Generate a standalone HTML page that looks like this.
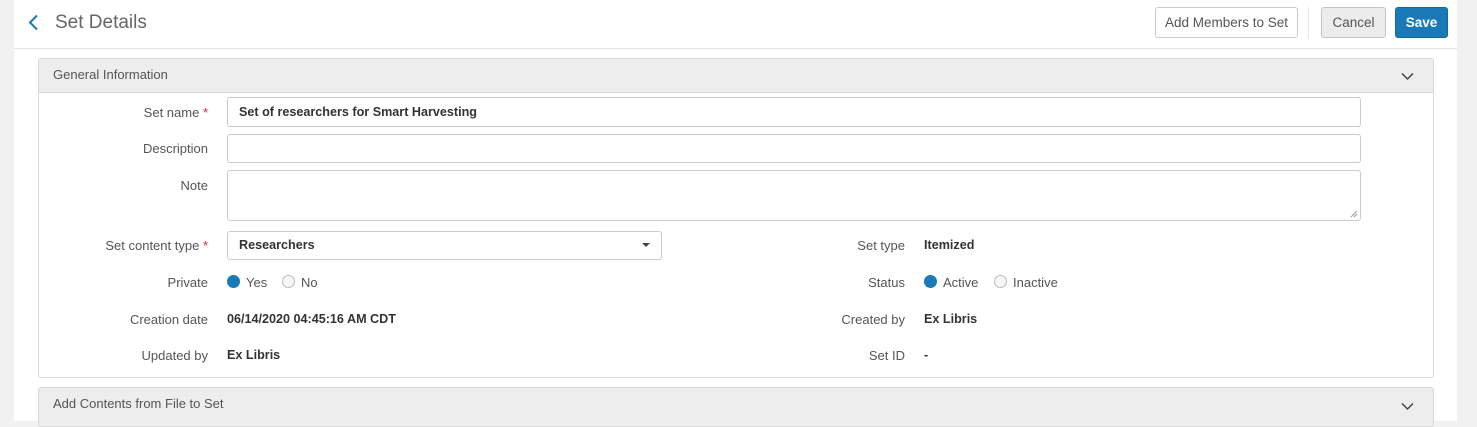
<!DOCTYPE html>
<html><head><style>
body{margin:0;width:1477px;height:421px;background:#f1f1f1;font-family:"Liberation Sans",sans-serif;color:#555;overflow:hidden;position:relative;font-size:13px}
.a{position:absolute}
.panel{left:14px;top:0;width:1443px;height:421px;background:#fff}
.lab{position:absolute;text-align:right;width:200px;font-size:13px;color:#555}
.val{position:absolute;font-weight:bold;color:#333;font-size:12.6px}
.inp{position:absolute;border:1px solid #ccc;border-radius:3px;background:#fff;box-sizing:border-box}
.req{color:#e0223a}
.rad{position:absolute;width:13px;height:13px;border-radius:50%;box-sizing:border-box}
.on{background:#1a7ab8}
.off{border:1px solid #bbb;background:#f7f7f7}
.btn{position:absolute;box-sizing:border-box;border-radius:3px;font-size:13.5px;text-align:center;line-height:29px;height:31px}
</style></head><body>
<div class="a panel"></div>
<svg class="a" style="left:27px;top:14px" width="12" height="17"><path d="M10 1.5 L3 8.5 L10 15.5" stroke="#1a7ab8" stroke-width="2" fill="none"/></svg>
<div class="a" style="left:55px;top:12px;font-size:19px;color:#666">Set Details</div>
<div class="btn" style="left:1155px;top:7px;width:143px;border:1px solid #ccc;background:#fff;color:#555">Add Members to Set</div>
<div class="a" style="left:1308px;top:7px;width:1px;height:31px;background:#e6e6e6"></div>
<div class="btn" style="left:1321px;top:7px;width:65px;border:1px solid #c4c4c4;background:#ececec;color:#555">Cancel</div>
<div class="btn" style="left:1395px;top:7px;width:53px;background:#1a7ab8;color:#fff;font-weight:bold;border:1px solid #16679c">Save</div>
<div class="a" style="left:14px;top:48px;width:1443px;height:1px;background:#e3e3e3"></div>

<div class="a" style="left:38px;top:58px;width:1396px;height:320px;border:1px solid #d9d9d9;border-radius:3px;box-sizing:border-box"></div>
<div class="a" style="left:39px;top:59px;width:1394px;height:33px;background:#ededed;border-bottom:1px solid #d9d9d9"></div>
<div class="a" style="left:53px;top:67px;color:#555">General Information</div>
<svg class="a" style="left:1401px;top:72px" width="13" height="9"><path d="M1 1.5 L6.5 7 L12 1.5" stroke="#444" stroke-width="1.5" fill="none"/></svg>

<div class="lab" style="left:8px;top:105px">Set name <span class="req">*</span></div>
<div class="inp" style="left:227px;top:97px;width:1134px;height:30px"></div>
<div class="val" style="left:239px;top:105px">Set of researchers for Smart Harvesting</div>
<div class="lab" style="left:8px;top:141px">Description</div>
<div class="inp" style="left:227px;top:134px;width:1134px;height:29px"></div>
<div class="lab" style="left:8px;top:178px">Note</div>
<div class="inp" style="left:227px;top:170px;width:1134px;height:51px"></div>
<svg class="a" style="left:1350px;top:210px" width="8" height="8"><path d="M7 1L1 7M7 4L4 7" stroke="#999"/></svg>

<div class="lab" style="left:8px;top:238px">Set content type <span class="req">*</span></div>
<div class="inp" style="left:227px;top:231px;width:435px;height:29px"></div>
<div class="val" style="left:239px;top:238px">Researchers</div>
<svg class="a" style="left:642px;top:243px" width="8" height="5"><path d="M0 0H8L4 4Z" fill="#444"/></svg>
<div class="lab" style="left:8px;top:275px">Private</div>
<div class="rad on" style="left:227px;top:275px"></div><div class="a" style="left:246px;top:275px">Yes</div>
<div class="rad off" style="left:282px;top:275px"></div><div class="a" style="left:301px;top:275px">No</div>
<div class="lab" style="left:8px;top:312px">Creation date</div>
<div class="val" style="left:227px;top:312px">06/14/2020 04:45:16 AM CDT</div>
<div class="lab" style="left:8px;top:348px">Updated by</div>
<div class="val" style="left:227px;top:348px">Ex Libris</div>

<div class="lab" style="left:705px;top:238px">Set type</div>
<div class="val" style="left:924px;top:238px">Itemized</div>
<div class="lab" style="left:705px;top:275px">Status</div>
<div class="rad on" style="left:924px;top:275px"></div><div class="a" style="left:943px;top:275px">Active</div>
<div class="rad off" style="left:994px;top:275px"></div><div class="a" style="left:1013px;top:275px">Inactive</div>
<div class="lab" style="left:705px;top:312px">Created by</div>
<div class="val" style="left:924px;top:312px">Ex Libris</div>
<div class="lab" style="left:705px;top:348px">Set ID</div>
<div class="val" style="left:924px;top:348px">-</div>

<div class="a" style="left:38px;top:387px;width:1396px;height:40px;border:1px solid #d9d9d9;border-radius:3px;background:#ededed;box-sizing:border-box"></div>
<div class="a" style="left:53px;top:396px">Add Contents from File to Set</div>
<svg class="a" style="left:1401px;top:402px" width="13" height="9"><path d="M1 1.5 L6.5 7 L12 1.5" stroke="#444" stroke-width="1.5" fill="none"/></svg>
</body></html>
